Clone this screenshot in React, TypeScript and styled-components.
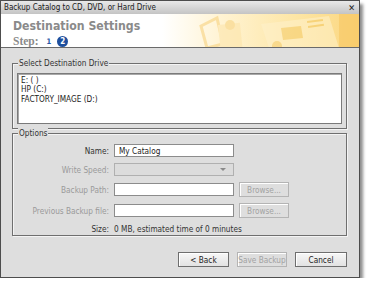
import React from "react";
import styled, { createGlobalStyle } from "styled-components";

const Global = createGlobalStyle`
  html, body { margin: 0; padding: 0; background: #ffffff; }
  body { font-family: "DejaVu Sans Condensed", "DejaVu Sans", sans-serif; font-stretch: condensed; }
`;

const Dialog = styled.div`
  box-sizing: border-box;
  width: 360px;
  height: 278px;
  border: 1px solid #4d4d4d;
  box-shadow: 3px 4px 3px rgba(0, 0, 0, 0.45);
  background: #dedede;
  display: flex;
  flex-direction: column;
`;

const TitleBar = styled.div`
  height: 13px;
  display: flex;
  align-items: center;
  justify-content: space-between;
  padding: 0 4px 0 3px;
  background: linear-gradient(#e9e9e9, #c4c4c4);
  font-size: 8px;
  color: #1a1a1a;
`;

const Close = styled.span`
  font-family: "DejaVu Sans", sans-serif;
  font-weight: bold;
  font-size: 9px;
  color: #222;
`;

const Banner = styled.div`
  position: relative;
  height: 34px;
  border-bottom: 1px solid #6a6a6a;
  background: linear-gradient(90deg, #ffffff 0%, #ffffff 45%, #fff3d2 62%, #fde6a6 82%, #fbd67e 100%);
  padding: 5px 0 0 12px;
  box-sizing: border-box;
  overflow: hidden;
`;

const Art = styled.svg`
  position: absolute;
  right: 0;
  top: 0;
`;

const Heading = styled.div`
  position: relative;
  font-family: "DejaVu Sans Condensed", "DejaVu Sans", sans-serif;
  font-stretch: condensed;
  font-weight: bold;
  font-size: 12.2px;
  color: #8a8a8a;
  line-height: 15px;
`;

const StepRow = styled.div`
  position: relative;
  display: flex;
  align-items: center;
  gap: 6px;
  margin-top: 1px;
`;

const StepLabel = styled.span`
  font-family: "Liberation Serif", serif;
  font-weight: bold;
  font-size: 11.5px;
  color: #8a8a8a;
  margin-right: 2px;
`;

const StepNum = styled.span<{ $active?: boolean }>`
  display: inline-flex;
  align-items: center;
  justify-content: center;
  font-family: "DejaVu Sans", sans-serif;
  font-weight: bold;
  font-size: ${(p) => (p.$active ? "8px" : "7.5px")};
  width: ${(p) => (p.$active ? "11px" : "auto")};
  height: 11px;
  border-radius: 50%;
  color: ${(p) => (p.$active ? "#ffffff" : "#2858a6")};
  background: ${(p) => (p.$active ? "#1d4f9e" : "transparent")};
`;

const Body = styled.div`
  flex: 1;
  display: flex;
  flex-direction: column;
  padding: 15px 12px 0 11px;
  font-size: 8.2px;
  color: #222;
`;

const Group = styled.div<{ $h: number; $gap?: number }>`
  position: relative;
  box-sizing: border-box;
  height: ${(p) => p.$h}px;
  margin-top: ${(p) => p.$gap ?? 0}px;
  border: 1px solid #6f6f6f;
  box-shadow: inset 1px 1px 0 #f4f4f4, 1px 1px 0 #f4f4f4;
`;

const Legend = styled.span`
  position: absolute;
  top: -6px;
  left: 5px;
  padding: 0 1px;
  background: #dedede;
  line-height: 10px;
  color: #333;
`;

const DriveList = styled.div`
  box-sizing: border-box;
  margin: 9px 4px 4px 4px;
  height: 51px;
  background: #ffffff;
  border: 1px solid #7a7a7a;
  box-shadow: inset 1px 1px 0 #a8a8a8;
  padding: 2px 3px;
  display: flex;
  flex-direction: column;
`;

const Drive = styled.div`
  line-height: 9.3px;
  color: #1c1c1c;
`;

const Options = styled.div`
  display: grid;
  grid-template-columns: 96px 120px 50px;
  column-gap: 5px;
  row-gap: 6px;
  padding: 10px 0 0 0;
  align-items: center;
`;

const Label = styled.span<{ $disabled?: boolean }>`
  text-align: right;
  white-space: nowrap;
  color: ${(p) => (p.$disabled ? "#9a9a9a" : "#333")};
`;

const Input = styled.div<{ $disabled?: boolean }>`
  box-sizing: border-box;
  height: 13px;
  display: flex;
  align-items: center;
  justify-content: space-between;
  padding: 0 4px;
  border: 1px solid ${(p) => (p.$disabled ? "#b0b0b0" : "#8c8c8c")};
  background: ${(p) => (p.$disabled ? "#dcdcdc" : "#ffffff")};
  color: #1c1c1c;
`;

const Caret = styled.span`
  width: 0;
  height: 0;
  border-left: 3px solid transparent;
  border-right: 3px solid transparent;
  border-top: 3px solid #8a8a8a;
  margin-right: 3px;
`;

const Button = styled.button<{ $disabled?: boolean; $w?: number }>`
  box-sizing: border-box;
  width: ${(p) => p.$w ?? 50}px;
  height: 15px;
  padding: 0;
  font: inherit;
  font-size: 8.2px;
  white-space: nowrap;
  border: 1px solid ${(p) => (p.$disabled ? "#b4b4b4" : "#6e6e6e")};
  background: ${(p) => (p.$disabled ? "#dedede" : "linear-gradient(#f7f7f7, #e2e2e2)")};
  color: ${(p) => (p.$disabled ? "#a2a2a2" : "#222")};
  box-shadow: inset 1px 1px 0 #ffffff;
`;

const SizeText = styled.span`
  grid-column: 2 / 4;
  color: #333;
`;

const Footer = styled.div`
  display: flex;
  justify-content: flex-end;
  gap: 8px;
  margin-top: 16px;
`;

export default function App() {
  return (
    <>
      <Global />
      <Dialog>
        <TitleBar>
          <span>Backup Catalog to CD, DVD, or Hard Drive</span>
          <Close>✕</Close>
        </TitleBar>
        <Banner>
          <Art width="170" height="34" viewBox="0 0 170 34">
            <g opacity="0.55">
              <polygon points="12,12 28,4 34,30 18,34" fill="none" stroke="#f7cf76" strokeWidth="3" />
              <rect x="30" y="10" width="22" height="24" fill="#fde4a8" transform="rotate(-6 40 20)" />
              <circle cx="41" cy="11" r="5" fill="#f7d27e" />
              <polygon points="72,10 140,2 150,34 80,34" fill="#fff2cc" />
              <polygon points="92,14 112,12 114,24 94,26" fill="#f5cc6a" />
              <rect x="118" y="6" width="16" height="2" fill="#f3c860" transform="rotate(-8 126 7)" />
              <rect x="119" y="11" width="16" height="2" fill="#f3c860" transform="rotate(-8 126 12)" />
              <circle cx="88" cy="32" r="5" fill="#f5cd70" />
              <rect x="150" y="0" width="20" height="34" fill="#f8c660" />
            </g>
          </Art>
          <Heading>Destination Settings</Heading>
          <StepRow>
            <StepLabel>Step:</StepLabel>
            <StepNum>1</StepNum>
            <StepNum $active>2</StepNum>
          </StepRow>
        </Banner>
        <Body>
          <Group $h={66}>
            <Legend>Select Destination Drive</Legend>
            <DriveList>
              <Drive>E: ( )</Drive>
              <Drive>HP (C:)</Drive>
              <Drive>FACTORY_IMAGE (D:)</Drive>
            </DriveList>
          </Group>
          <Group $h={103} $gap={4}>
            <Legend>Options</Legend>
            <Options>
              <Label>Name:</Label>
              <Input>My Catalog</Input>
              <span />
              <Label $disabled>Write Speed:</Label>
              <Input $disabled>
                <span />
                <Caret />
              </Input>
              <span />
              <Label $disabled>Backup Path:</Label>
              <Input />
              <Button $disabled>Browse...</Button>
              <Label $disabled>Previous Backup file:</Label>
              <Input />
              <Button $disabled>Browse...</Button>
              <Label>Size:</Label>
              <SizeText>0 MB, estimated time of 0 minutes</SizeText>
            </Options>
          </Group>
          <Footer>
            <Button $w={51}>&lt; Back</Button>
            <Button $disabled $w={50}>Save Backup</Button>
            <Button $w={52}>Cancel</Button>
          </Footer>
        </Body>
      </Dialog>
    </>
  );
}
